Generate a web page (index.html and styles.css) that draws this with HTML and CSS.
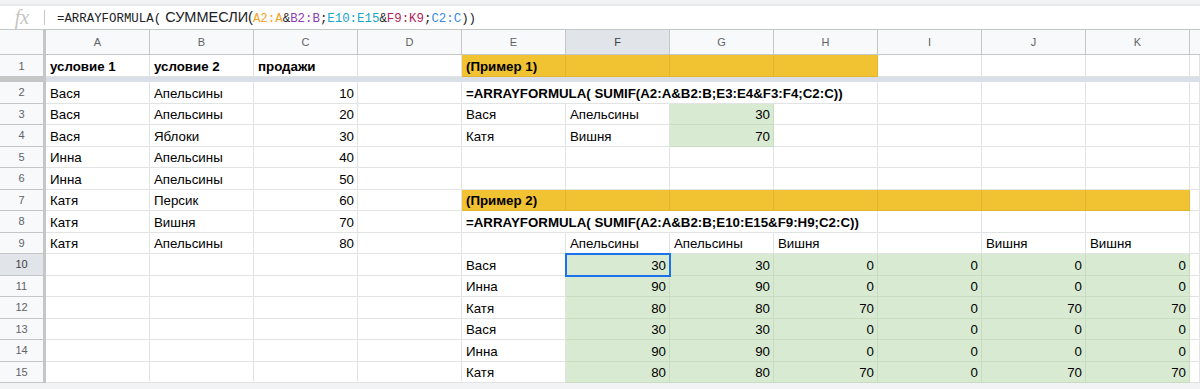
FILE: index.html
```html
<!DOCTYPE html>
<html lang="ru">
<head>
    <meta charset="UTF-8">
    <title>Таблица</title>
    <link rel="stylesheet" href="styles.css">
</head>
<body>
    <!-- Строка формул -->
    <div class="fbar">
        <span class="fx">fx</span>
        <span class="sep"></span>
        <span class="ftext">=ARRAYFORMULA(<span class="fn"> СУММЕСЛИ(</span><span class="r1">A2:A</span>&amp;<span class="r2">B2:B</span>;<span class="r3">E10:E15</span>&amp;<span class="r4">F9:K9</span>;<span class="r5">C2:C</span>))</span>
    </div>

    <div class="sheet">
        <div class="row head">
            <div class="ch corner"></div>
            <div class="ch">A</div><div class="ch">B</div><div class="ch">C</div><div class="ch">D</div>
            <div class="ch">E</div><div class="ch on">F</div><div class="ch">G</div><div class="ch">H</div>
            <div class="ch">I</div><div class="ch">J</div><div class="ch">K</div><div class="ch end"></div>
        </div>

        <div class="row first">
            <div class="rh">1</div>
            <div class="c b">условие 1</div><div class="c b">условие 2</div><div class="c b">продажи</div><div class="c"></div>
            <div class="c b y">(Пример 1)</div><div class="c y"></div><div class="c y"></div><div class="c y"></div>
            <div class="c"></div><div class="c"></div><div class="c"></div><div class="c"></div>
        </div>

        <div class="freeze"><div class="fz-h"></div><div class="fz-c"></div></div>

        <div class="row">
            <div class="rh">2</div>
            <div class="c">Вася</div><div class="c">Апельсины</div><div class="c num">10</div><div class="c"></div>
            <div class="c b span4">=ARRAYFORMULA( SUMIF(A2:A&amp;B2:B;E3:E4&amp;F3:F4;C2:C))</div>
            <div class="c"></div><div class="c"></div><div class="c"></div><div class="c"></div>
        </div>
        <div class="row">
            <div class="rh">3</div>
            <div class="c">Вася</div><div class="c">Апельсины</div><div class="c num">20</div><div class="c"></div>
            <div class="c">Вася</div><div class="c">Апельсины</div><div class="c num g">30</div><div class="c"></div>
            <div class="c"></div><div class="c"></div><div class="c"></div><div class="c"></div>
        </div>
        <div class="row">
            <div class="rh">4</div>
            <div class="c">Вася</div><div class="c">Яблоки</div><div class="c num">30</div><div class="c"></div>
            <div class="c">Катя</div><div class="c">Вишня</div><div class="c num g">70</div><div class="c"></div>
            <div class="c"></div><div class="c"></div><div class="c"></div><div class="c"></div>
        </div>
        <div class="row">
            <div class="rh">5</div>
            <div class="c">Инна</div><div class="c">Апельсины</div><div class="c num">40</div><div class="c"></div>
            <div class="c"></div><div class="c"></div><div class="c"></div><div class="c"></div>
            <div class="c"></div><div class="c"></div><div class="c"></div><div class="c"></div>
        </div>
        <div class="row">
            <div class="rh">6</div>
            <div class="c">Инна</div><div class="c">Апельсины</div><div class="c num">50</div><div class="c"></div>
            <div class="c"></div><div class="c"></div><div class="c"></div><div class="c"></div>
            <div class="c"></div><div class="c"></div><div class="c"></div><div class="c"></div>
        </div>
        <div class="row">
            <div class="rh">7</div>
            <div class="c">Катя</div><div class="c">Персик</div><div class="c num">60</div><div class="c"></div>
            <div class="c b y">(Пример 2)</div><div class="c y"></div><div class="c y"></div><div class="c y"></div>
            <div class="c y"></div><div class="c y"></div><div class="c y"></div><div class="c"></div>
        </div>
        <div class="row">
            <div class="rh">8</div>
            <div class="c">Катя</div><div class="c">Вишня</div><div class="c num">70</div><div class="c"></div>
            <div class="c b span4">=ARRAYFORMULA( SUMIF(A2:A&amp;B2:B;E10:E15&amp;F9:H9;C2:C))</div>
            <div class="c"></div><div class="c"></div><div class="c"></div><div class="c"></div>
        </div>
        <div class="row">
            <div class="rh">9</div>
            <div class="c">Катя</div><div class="c">Апельсины</div><div class="c num">80</div><div class="c"></div>
            <div class="c"></div><div class="c">Апельсины</div><div class="c">Апельсины</div><div class="c">Вишня</div>
            <div class="c"></div><div class="c">Вишня</div><div class="c">Вишня</div><div class="c"></div>
        </div>

        <!-- Результаты примера 2 -->
        <div class="row">
            <div class="rh on">10</div>
            <div class="c"></div><div class="c"></div><div class="c"></div><div class="c"></div>
            <div class="c">Вася</div><div class="c num g sel">30</div><div class="c num g">30</div><div class="c num g">0</div>
            <div class="c num g">0</div><div class="c num g">0</div><div class="c num g">0</div><div class="c"></div>
        </div>
        <div class="row">
            <div class="rh">11</div>
            <div class="c"></div><div class="c"></div><div class="c"></div><div class="c"></div>
            <div class="c">Инна</div><div class="c num g">90</div><div class="c num g">90</div><div class="c num g">0</div>
            <div class="c num g">0</div><div class="c num g">0</div><div class="c num g">0</div><div class="c"></div>
        </div>
        <div class="row">
            <div class="rh">12</div>
            <div class="c"></div><div class="c"></div><div class="c"></div><div class="c"></div>
            <div class="c">Катя</div><div class="c num g">80</div><div class="c num g">80</div><div class="c num g">70</div>
            <div class="c num g">0</div><div class="c num g">70</div><div class="c num g">70</div><div class="c"></div>
        </div>
        <div class="row">
            <div class="rh">13</div>
            <div class="c"></div><div class="c"></div><div class="c"></div><div class="c"></div>
            <div class="c">Вася</div><div class="c num g">30</div><div class="c num g">30</div><div class="c num g">0</div>
            <div class="c num g">0</div><div class="c num g">0</div><div class="c num g">0</div><div class="c"></div>
        </div>
        <div class="row">
            <div class="rh">14</div>
            <div class="c"></div><div class="c"></div><div class="c"></div><div class="c"></div>
            <div class="c">Инна</div><div class="c num g">90</div><div class="c num g">90</div><div class="c num g">0</div>
            <div class="c num g">0</div><div class="c num g">0</div><div class="c num g">0</div><div class="c"></div>
        </div>
        <div class="row">
            <div class="rh">15</div>
            <div class="c"></div><div class="c"></div><div class="c"></div><div class="c"></div>
            <div class="c">Катя</div><div class="c num g">80</div><div class="c num g">80</div><div class="c num g">70</div>
            <div class="c num g">0</div><div class="c num g">70</div><div class="c num g">70</div><div class="c"></div>
        </div>
    </div>
</body>
</html>
```

FILE: styles.css
```css
body {
    margin: 0;
    font-family: "Liberation Sans", Arial, sans-serif;
    background-color: #f1f3f4;
    overflow: hidden;
}
.fbar {
    margin-top: 4px;
    height: 23px;
    border-top: 2px solid #e8eaed;
    border-bottom: 1px solid #c4c7c5;
    background-color: white;
    display: flex;
    align-items: center;
}
.fx {
    width: 44px;
    text-align: center;
    font-family: "Liberation Serif", serif;
    font-style: italic;
    font-size: 20px;
    color: #c4c4c4;
}
.sep {
    width: 1px;
    height: 15px;
    background-color: #c4c7c5;
}
.ftext {
    padding-left: 12px;
    font-family: "Liberation Mono", monospace;
    font-size: 12.4px;
    color: #202124;
    white-space: nowrap;
}
.fn {
    font-family: "Liberation Sans", Arial, sans-serif;
    font-size: 14.5px;
}
.r1 { color: #f4a324; }
.r2 { color: #8e3cb5; }
.r3 { color: #16a6c9; }
.r4 { color: #b3215a; }
.r5 { color: #3b8ae6; }

.sheet {
    background-color: white;
}
.row {
    display: grid;
    grid-template-columns: 46px repeat(11, 104px) 1fr;
    height: 21.5px;
}
.row.head {
    height: 25px;
}
.row.first {
    height: 22px;
}
.ch, .rh {
    background-color: #f8f9fa;
    color: #5f6368;
    font-size: 11px;
    display: flex;
    align-items: center;
    justify-content: center;
    border-bottom: 1px solid #c4c7c5;
    box-sizing: border-box;
}
.ch {
    border-right: 1px solid #c4c7c5;
}
.ch.corner, .rh {
    border-right: 3px solid #c4c7c5;
}
.ch.end {
    border-right: none;
}
.ch.on, .rh.on {
    background-color: #e1e4e8;
    color: #3c4043;
}
.c {
    box-sizing: border-box;
    border-right: 1px solid #e2e3e3;
    border-bottom: 1px solid #e2e3e3;
    padding: 0 3px 2px 4px;
    display: flex;
    align-items: flex-end;
    font-size: 13.3px;
    line-height: 15px;
    color: black;
    white-space: nowrap;
    position: relative;
}
.c.num {
    justify-content: flex-end;
}
.c.b {
    font-weight: bold;
}
.c.span4 {
    grid-column: span 4;
}
.c.y {
    background-color: #f1c232;
    border-color: #e2b52d;
}
.c.g {
    background-color: #d9ead3;
    border-color: #c8dcc0;
}
.c.sel {
    outline: 2px solid #1a73e8;
    outline-offset: -1px;
    z-index: 1;
}
.freeze {
    display: grid;
    grid-template-columns: 46px 1fr;
    height: 5px;
}
.fz-h {
    background-color: #c4c7c5;
}
.fz-c {
    background-color: #dadfe7;
}
```
